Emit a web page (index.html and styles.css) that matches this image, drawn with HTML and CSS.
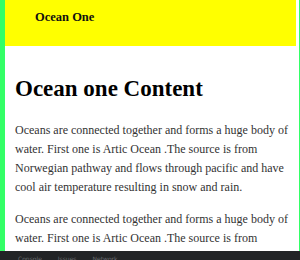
FILE: index.html
```html
<!DOCTYPE html>
<html>
<head>
<meta charset="utf-8">
<link rel="stylesheet" href="styles.css">
</head>
<body>
<div class="page">
  <header class="top">
    <span class="brand">Ocean One</span>
  </header>
  <main class="content">
    <h1 class="title">Ocean one Content</h1>
    <p class="text">Oceans are connected together and forms a huge body of water. First one is Artic Ocean .The source is from Norwegian pathway and flows through pacific and have cool air temperature resulting in snow and rain.</p>
    <p class="text">Oceans are connected together and forms a huge body of water. First one is Artic Ocean .The source is from Norwegian pathway and flows through pacific and have cool air temperature resulting in snow and rain.</p>
  </main>
</div>
<div class="status">
  <span class="tab">Console</span><span class="tab">Issues</span><span class="tab">Network</span>
</div>
</body>
</html>
```

FILE: styles.css
```css
html, body {
  margin: 0;
  padding: 0;
  height: 100%;
  overflow: hidden;
}
body {
  background: #33ff66;
  font-family: "Liberation Serif", serif;
  color: #222;
}
.page {
  margin-left: 5px;
  margin-right: 1px;
  height: 251px;
  background: #fff;
  overflow: hidden;
}
.top {
  height: 46px;
  box-sizing: border-box;
  background: #ffff00;
  display: flex;
  align-items: flex-start;
  padding: 10px 0 0 30px;
  margin-right: 3px;
}
.brand {
  font-weight: bold;
  font-size: 12.5px;
  color: #111;
}
.content {
  padding: 0 10px;
}
.title {
  font-size: 23px;
  margin: 30px 0 19px;
  color: #000;
}
.text {
  font-size: 12px;
  line-height: 19px;
  margin: 0 0 13px;
  color: #333;
}
.status {
  height: 9px;
  box-sizing: border-box;
  padding: 4px 0 0 18px;
  background: #222426;
  color: #6a6d70;
  font-family: "DejaVu Sans", sans-serif;
  font-size: 6px;
  line-height: 8px;
  display: flex;
  gap: 16px;
  overflow: hidden;
}
```
